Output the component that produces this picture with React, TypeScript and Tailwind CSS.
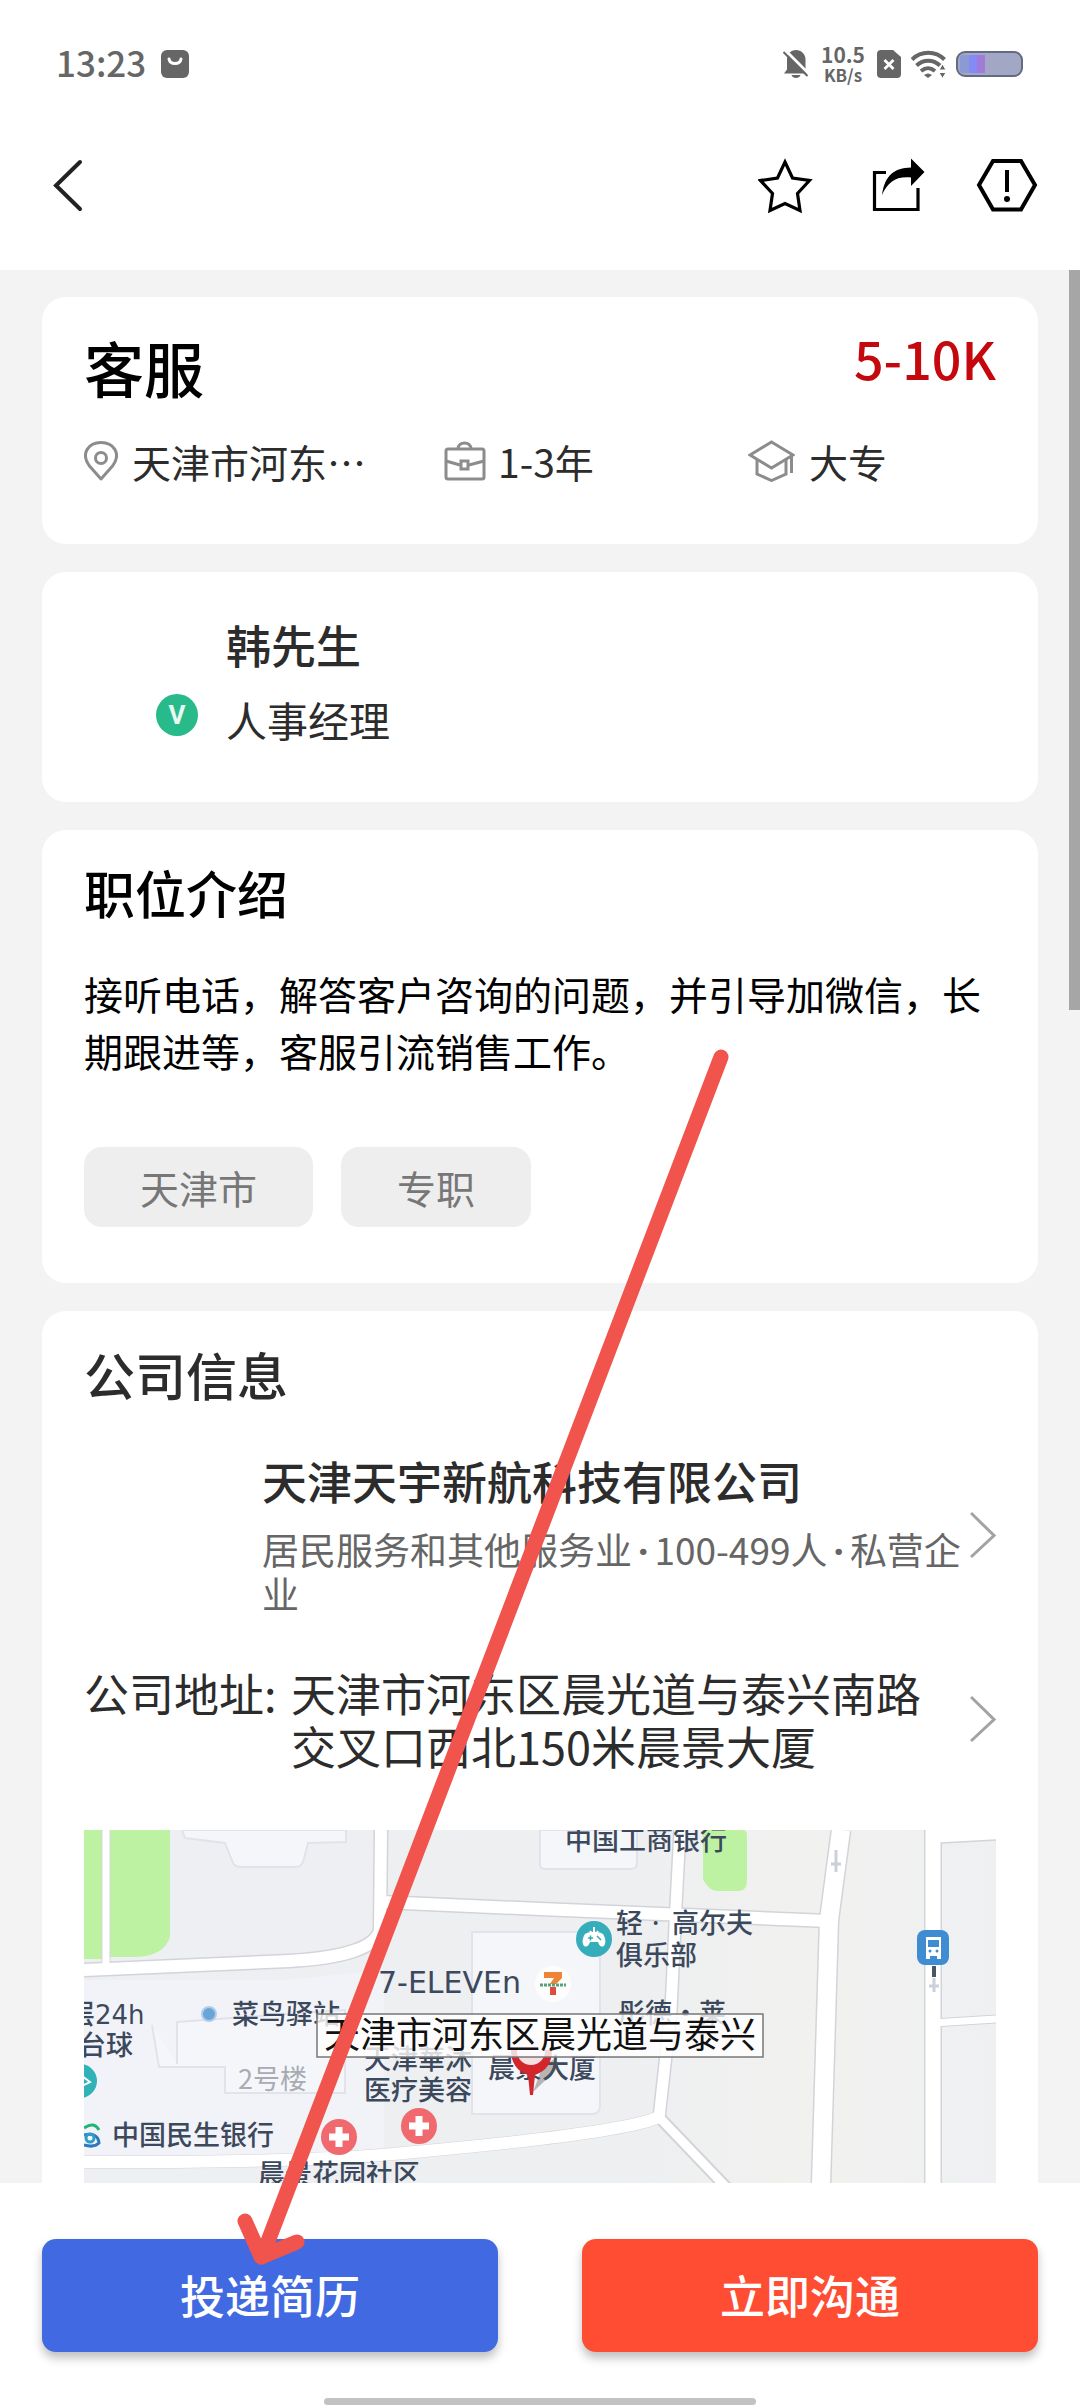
import type { ReactNode } from "react";

function StatusBar() {
  return (
    <div className="flex h-32 items-center justify-between pr-[57px] pl-14 text-[#666666]">
      <div className="flex items-center gap-[15px]">
        <time className="pb-1 text-[35px] leading-10 font-medium">13:23</time>
        <svg className="h-7 w-7" viewBox="0 0 28 28" aria-hidden="true">
          <rect width="28" height="28" rx="6" fill="#666" />
          <path d="M8 9c1 6 11 6 12 0" fill="none" stroke="#fff" strokeWidth="3" strokeLinecap="round" />
        </svg>
      </div>
      <div className="flex items-center">
        <svg className="h-7 w-[26px]" viewBox="0 0 26 28" aria-hidden="true">
          <path d="M1 23.500l3-4V9.500C4 4 8 0 13 0s9.500 4 9.500 9.500v9.500l3 4.500zM8.500 25h9c-1 4-8 4-9 0z" fill="#666" />
          <path d="M2 0l24 24" stroke="#fff" strokeWidth="3" />
          <path d="M.5 2l24 24" stroke="#666" strokeWidth="2" />
        </svg>
        <div className="ml-3 flex flex-col items-center font-bold">
          <span className="text-[21px] leading-[22px]">10.5</span>
          <span className="text-[17px] leading-5">KB/s</span>
        </div>
        <svg className="ml-3 h-7 w-6" viewBox="0 0 24 28" aria-hidden="true">
          <path d="M4 0h12l8 7v17a4 4 0 0 1-4 4H4a4 4 0 0 1-4-4V4a4 4 0 0 1 4-4z" fill="#666" />
          <path d="M7.500 10l9 9m0-9l-9 9" stroke="#fff" strokeWidth="2.800" />
        </svg>
        <svg className="ml-[10px] h-7 w-[35px]" viewBox="0 0 35 28" aria-hidden="true">
          <g fill="none" stroke="#666" strokeWidth="4">
            <path d="M1 9.500c9-9 23.500-9 32.500 0" />
            <path d="M5.500 15.500c7-6.500 16.500-6.500 23.500 0" />
            <path d="M10 21c5-4 9-4 14 0" />
          </g>
          <path d="M13 25q4-3 8 0l-4 3z" fill="#666" />
          <path d="M31.500 14l3.500 6h-7zM31.500 28.500l3.500-6h-7z" fill="#666" stroke="#fff" strokeWidth="1" />
        </svg>
        <svg className="ml-[10px] h-[26px] w-[67px]" viewBox="0 0 67 26" aria-hidden="true">
          <rect x="1" y="1" width="65" height="24" rx="8" fill="#a3a7c6" stroke="#636b80" strokeWidth="2" />
          <rect x="4" y="4" width="10" height="18" rx="3" fill="#8c9ad2" />
          <rect x="13" y="4" width="8" height="18" fill="#858af5" />
          <rect x="21" y="4" width="8" height="18" fill="#a17bd9" />
        </svg>
      </div>
    </div>
  );
}

function NavBar() {
  return (
    <nav className="flex h-[116px] items-center justify-between pr-[42px] pl-[52px]">
      <button type="button" aria-label="返回">
        <svg className="h-[54px] w-8" viewBox="0 0 32 54" fill="none" stroke="#222" strokeWidth="4" strokeLinecap="round">
          <path d="M28 3L4 26.500l24 23.500" />
        </svg>
      </button>
      <div className="flex items-center gap-[58px] text-black">
        <button type="button" aria-label="收藏">
          <svg className="h-14 w-14" viewBox="0 0 56 56" fill="none" stroke="currentColor" strokeWidth="3.200">
            <path d="M27 4l7.500 16 17 2.500-12 13 2.500 17L27 45.500 12 52.500l2.500-17-12-13 17-2.500z" />
          </svg>
        </button>
        <button type="button" aria-label="分享">
          <svg className="h-14 w-[54px]" viewBox="0 0 54 56" fill="none" stroke="currentColor" strokeWidth="3.200">
            <path d="M14 14.500H2.500V51.500H46V30" />
            <path d="M10 37C13 17 22 10 39 9.500V.5L52.500 14 39 28V19.500C24 18 16 24 10 37z" fill="currentColor" stroke="none" />
          </svg>
        </button>
        <button type="button" aria-label="举报" className="-ml-2">
          <svg className="h-14 w-[62px]" viewBox="0 0 62 56" fill="none" stroke="currentColor" strokeWidth="4">
            <path d="M17 3h28l14 24-14 24.500H17L3 27z" />
            <path d="M31 12v22" />
            <circle cx="31" cy="41" r="3" fill="currentColor" stroke="none" />
          </svg>
        </button>
      </div>
    </nav>
  );
}

function Card({ className, children }: { className: string; children: ReactNode }) {
  return <section className={`rounded-3xl bg-white px-[42px] ${className}`}>{children}</section>;
}

function Chevron() {
  return (
    <svg className="h-12 w-[26px] shrink-0" viewBox="0 0 26 48" fill="none" stroke="#a3a3a3" strokeWidth="3" aria-hidden="true">
      <path d="M1 2l23 22.500L1 46" />
    </svg>
  );
}

function Dot() {
  return <span className="mx-[6px] font-['Noto_Sans',sans-serif] font-bold">·</span>;
}

function Tag({ children }: { children: ReactNode }) {
  return (
    <span className="flex h-20 items-center rounded-[18px] bg-[#eeeeee] px-14 text-[39px] leading-10 text-[#777777]">
      {children}
    </span>
  );
}

function LocationMap() {
  return (
    <div className="mt-[58px] overflow-hidden">
      <svg className="block w-full" viewBox="0 0 912 480" role="img" aria-label="公司位置地图">
        <defs>
          <linearGradient id="ground" x1="0" x2="1" y1="0" y2="0">
            <stop offset="0" stopColor="#eeeff2" />
            <stop offset="0.6" stopColor="#eeeff1" />
            <stop offset="0.8" stopColor="#f1f1ef" />
            <stop offset="1" stopColor="#eff0f2" />
          </linearGradient>
        </defs>
        <rect width="912" height="480" fill="url(#ground)" />
        <path d="M0 150H200L300 140V330L0 328z" fill="#f3f4f9" opacity="0.8" />
        <g fill="#f5f6fa" stroke="#e2e3ea" strokeWidth="2">
          <path d="M98 0l3 8 40 5 8 20q2 4 8 4h55q6 0 8-8l4-16 38-1V0z" />
          <path d="M456 0v34q0 5 5 5h86q6 0 6-6V0z" />
          <path d="M388 102h120q8 0 8 8v166q0 8-8 8H388z" />
          <path d="M68 195l7 42h66v26h120V180l-168 12v42" />
        </g>
        <path d="M0 0H19V129H0zM26 0H86V107Q80 126 52 127H26z" fill="#bdf2a2" />
        <path d="M619 0h39q5 0 5 5v45q0 11-8 11h-22q-8 0-14-12z" fill="#bdf2a2" />
        <g fill="none" stroke="#d3d4d9" strokeLinejoin="round">
          <path d="M22 0V138" strokeWidth="9" />
          <path d="M0 140L205 131Q290 126 296 100L297 0" strokeWidth="15" />
          <path d="M297 72L456 79L745 91" strokeWidth="15" />
          <path d="M596 0L592 75L587 180L575 288" strokeWidth="14" />
          <path d="M757 0L745 90L737 354L735 480" strokeWidth="21" />
          <path d="M849 0V480" strokeWidth="18" />
          <path d="M849 193L912 189" strokeWidth="9" />
          <path d="M0 332Q230 333 330 322Q540 303 575 287L641 356L750 460" strokeWidth="13" />
        </g>
        <g fill="none" stroke="#ffffff" strokeLinejoin="round">
          <path d="M22 0V138" strokeWidth="7" />
          <path d="M0 140L205 131Q290 126 296 100L297 0" strokeWidth="12" />
          <path d="M297 72L456 79L745 91" strokeWidth="12" />
          <path d="M596 0L592 75L587 180L575 288" strokeWidth="11" />
          <path d="M757 0L745 90L737 354L735 480" strokeWidth="18" />
          <path d="M849 0V480" strokeWidth="15" />
          <path d="M849 193L912 189" strokeWidth="7" />
          <path d="M0 332Q230 333 330 322Q540 303 575 287" strokeWidth="12" />
          <path d="M575 287L641 356L750 460" strokeWidth="9" />
        </g>
        <path d="M850 0H912V10L857 13z" fill="#fff" />
        <path d="M857 13L912 10" stroke="#d3d4d9" strokeWidth="1.500" />
        <path d="M752 20v22m-5-8h10M850 148v14m-5-6h10" stroke="#cbd0db" strokeWidth="3" />

        <g fill="#3c495c" fontSize="27" fontWeight="500">
          <text x="481" y="20">中国工商银行</text>
          <text x="532" y="103">
            轻<tspan x="568" fontFamily="Noto Sans">·</tspan>
            <tspan x="588">高尔夫</tspan>
          </text>
          <text x="532" y="135">俱乐部</text>
          <text x="294" y="163" fontSize="30" fontFamily="DejaVu Sans" fontWeight="400">7-ELEVEn</text>
          <text x="-16" y="194">
            层<tspan fontFamily="DejaVu Sans" fontSize="26" fontWeight="400">24h</tspan>
          </text>
          <text x="-5" y="225">台球</text>
          <text x="148" y="194">菜鸟驿站</text>
          <text x="534" y="193">彤德·莱</text>
          <text x="280" y="239">天津華沐</text>
          <text x="280" y="270">医疗美容</text>
          <text x="404" y="248">晨景大厦</text>
          <text x="28" y="315">中国民生银行</text>
          <text x="174" y="354">晨景花园社区</text>
          <text x="154" y="259" fill="#a9abb2" fontWeight="400">2号楼</text>
        </g>

        <circle cx="125" cy="184" r="7" fill="#68a5d8" stroke="#b3cce6" strokeWidth="2" />
        <circle cx="-4" cy="251" r="17" fill="#31b1b8" />
        <path d="M-2 246l8 6-8 4" fill="none" stroke="#fff" strokeWidth="2" />
        <g fill="none" strokeWidth="3">
          <path d="M0 298q10-7 15 2" stroke="#22b573" />
          <path d="M0 305q14-3 15 8q-5 5-15 2" stroke="#2e78bf" />
          <circle cx="6" cy="308" r="4" stroke="#2e9fc4" />
        </g>
        <g>
          <circle cx="510" cy="109" r="18" fill="#35adba" />
          <path d="M501 104c5-3 13-3 18 0 3 5 3 9 1 12-4 2-5-2-6-4h-8c-1 2-2 6-6 4-2-3-2-7 1-12z" fill="#fff" />
          <path d="M510 97v9m-4-5l4 5 4-5" fill="none" stroke="#fff" strokeWidth="2" />
          <path d="M504 108h5m-2.500-2.500v5M513 106l4 4" stroke="#35adba" strokeWidth="1.500" />
        </g>
        <g>
          <circle cx="469" cy="154" r="18" fill="#fdfdfd" />
          <path d="M460 142h18v6l-6 6h-6l4-6h-10z" fill="#ee8436" />
          <path d="M456 155h26" stroke="#58a27b" strokeWidth="3" strokeDasharray="3 1" />
          <path d="M466 157h6v8h-6z" fill="#df4d3c" />
        </g>
        <g fill="#f0696f">
          <circle cx="255" cy="307" r="18" />
          <circle cx="335" cy="296" r="18" />
        </g>
        <path d="M255 297v20m-10-10h20M335 286v20m-10-10h20" stroke="#fff" strokeWidth="7" />
        <g>
          <rect x="833" y="100" width="32" height="35" rx="8" fill="#3f8cd2" />
          <path d="M842 107h15v22h-4v-3h-7v3h-4z" fill="#fff" />
          <path d="M844 110h11v7h-11z" fill="#3f8cd2" />
          <circle cx="846" cy="121" r="1.500" fill="#3f8cd2" />
          <circle cx="853" cy="121" r="1.500" fill="#3f8cd2" />
          <path d="M850 136v11" stroke="#4b5563" strokeWidth="4" />
        </g>
        <g>
          <path d="M449 262l20-19q10-10 1-14l-12 9z" fill="#555" opacity="0.4" />
          <path d="M427 220q0 19 17 25l2 20h3l2-20q17-6 17-25z" fill="#d3262c" />
          <circle cx="447" cy="221" r="14" fill="#f4dfe3" />
        </g>
        <rect x="233" y="184" width="446" height="43" fill="#ffffff" fillOpacity="0.8" stroke="#777" strokeWidth="1.500" />
        <text x="240" y="218" fontSize="36" fill="#111">天津市河东区晨光道与泰兴</text>
      </svg>
    </div>
  );
}

function Annotation() {
  return (
    <svg
      className="pointer-events-none absolute top-[1040px] left-[230px] h-[1240px] w-[510px]"
      viewBox="230 1040 510 1240"
      fill="none"
      stroke="#f1534d"
      strokeWidth="15"
      strokeLinecap="round"
      strokeLinejoin="round"
      aria-hidden="true"
    >
      <path d="M721 1057L262 2257" />
      <path d="M245 2221L261 2257L297 2242" />
    </svg>
  );
}

export default function App() {
  return (
    <div
      lang="zh-CN"
      className="relative flex h-screen flex-col overflow-hidden bg-white font-['Noto_Sans_CJK_SC',sans-serif] text-[#2c2c2c]"
    >
      <header className="shrink-0 pb-[26px]">
        <StatusBar />
        <NavBar />
      </header>

      <main className="relative min-h-0 flex-1 overflow-hidden bg-[#f3f3f3] px-[42px] pt-[27px]">
        <div className="flex flex-col gap-7">
          <Card className="pt-10 pb-[55px]">
            <div className="flex items-start justify-between text-black">
              <h1 className="text-[60px] leading-[60px] font-medium">客服</h1>
              <strong className="text-[52px] leading-[42px] font-medium text-[#c4080e]">5-10K</strong>
            </div>
            <ul className="mt-9 grid grid-cols-[360fr_304fr_248fr] text-[39px] leading-[56px]">
              <li className="flex items-center gap-[14px]">
                <svg className="h-10 w-[34px]" viewBox="0 0 34 40" fill="none" stroke="#8c8c8c" strokeWidth="3" aria-hidden="true">
                  <path d="M17 38L5.500 25C-4 12 5 1.500 17 1.500S38 12 28.500 25z" strokeLinejoin="round" />
                  <circle cx="17" cy="17" r="5.500" />
                </svg>
                天津市河东⋯
              </li>
              <li className="flex items-center gap-3">
                <svg className="h-10 w-[42px]" viewBox="0 0 42 40" fill="none" stroke="#8c8c8c" strokeWidth="3" aria-hidden="true">
                  <rect x="2" y="8" width="38" height="30" rx="2" />
                  <path d="M14 8c0-8 13-8 13 0M2 20l14 4m9 0l15-4" />
                  <rect x="17" y="20" width="7" height="8" />
                </svg>
                1-3年
              </li>
              <li className="flex items-center gap-[14px]">
                <svg className="h-[42px] w-[47px]" viewBox="0 0 47 42" fill="none" stroke="#8c8c8c" strokeWidth="3" aria-hidden="true">
                  <path d="M23.500 2L45 15 23.500 28 2 15z" />
                  <path d="M9 20v14l14.500 6.500L38 34V20M43.500 17v16" />
                </svg>
                大专
              </li>
            </ul>
          </Card>

          <Card className="pt-[46px] pb-14">
            <div className="flex gap-7">
              <div className="relative mt-1 h-[114px] w-[114px]">
                <span className="absolute right-0 bottom-0 flex h-[42px] w-[42px] items-center justify-center rounded-full bg-[#28ba8b] font-['Roboto',sans-serif] text-[26px] leading-8 font-bold text-[#e9f8f3]">
                  V
                </span>
              </div>
              <div>
                <h2 className="text-[45px] leading-[54px] font-medium">韩先生</h2>
                <p className="mt-5 text-[41px] leading-[54px]">人事经理</p>
              </div>
            </div>
          </Card>

          <Card className="pt-8 pb-14 text-black">
            <h2 className="text-[51px] leading-[60px] font-medium">职位介绍</h2>
            <p className="mt-[43px] text-[39px] leading-[57px]">
              接听电话，解答客户咨询的问题，并引导加微信，长期跟进等，客服引流销售工作。
            </p>
            <div className="mt-[68px] flex gap-7">
              <Tag>天津市</Tag>
              <Tag>专职</Tag>
            </div>
          </Card>

          <Card className="pt-[33px]">
            <h2 className="text-[51px] leading-[60px] font-medium">公司信息</h2>
            <a href="#company" className="mt-[50px] flex items-center">
              <span className="w-[178px] shrink-0" />
              <span className="min-w-0 flex-1">
                <strong className="block text-[45px] leading-[54px] font-medium">天津天宇新航科技有限公司</strong>
                <span className="mt-5 block text-[37px] leading-[43px] text-[#666666]">
                  居民服务和其他服务业
                  <Dot />
                  100-499人
                  <Dot />
                  私营企业
                </span>
              </span>
              <Chevron />
            </a>
            <a href="#address" className="mt-[51px] flex items-center text-[45px] leading-[53px]">
              <span className="w-[207px] shrink-0 self-start whitespace-nowrap">公司地址:</span>
              <span className="min-w-0 flex-1 pr-6">天津市河东区晨光道与泰兴南路交叉口西北150米晨景大厦</span>
              <Chevron />
            </a>
            <LocationMap />
          </Card>
        </div>
        <div className="absolute top-0 right-0 h-[740px] w-[11px] bg-[#a6a6a6]" />
      </main>

      <footer className="shrink-0 bg-white px-[42px] pt-14 pb-[3px]">
        <div className="grid grid-cols-2 gap-[84px] text-[45px] leading-[54px] font-medium text-white">
          <button type="button" className="h-[113px] rounded-[14px] bg-[#4169e1] pb-[2px] shadow-[0_6px_10px_rgba(0,0,0,0.25)]">
            投递简历
          </button>
          <button type="button" className="h-[113px] rounded-[14px] bg-[#ff4d33] pb-[2px] shadow-[0_6px_10px_rgba(0,0,0,0.25)]">
            立即沟通
          </button>
        </div>
        <div className="mx-auto mt-[46px] h-[7px] w-[432px] rounded-full bg-[#c2c2c2]" />
      </footer>

      <Annotation />
    </div>
  );
}
